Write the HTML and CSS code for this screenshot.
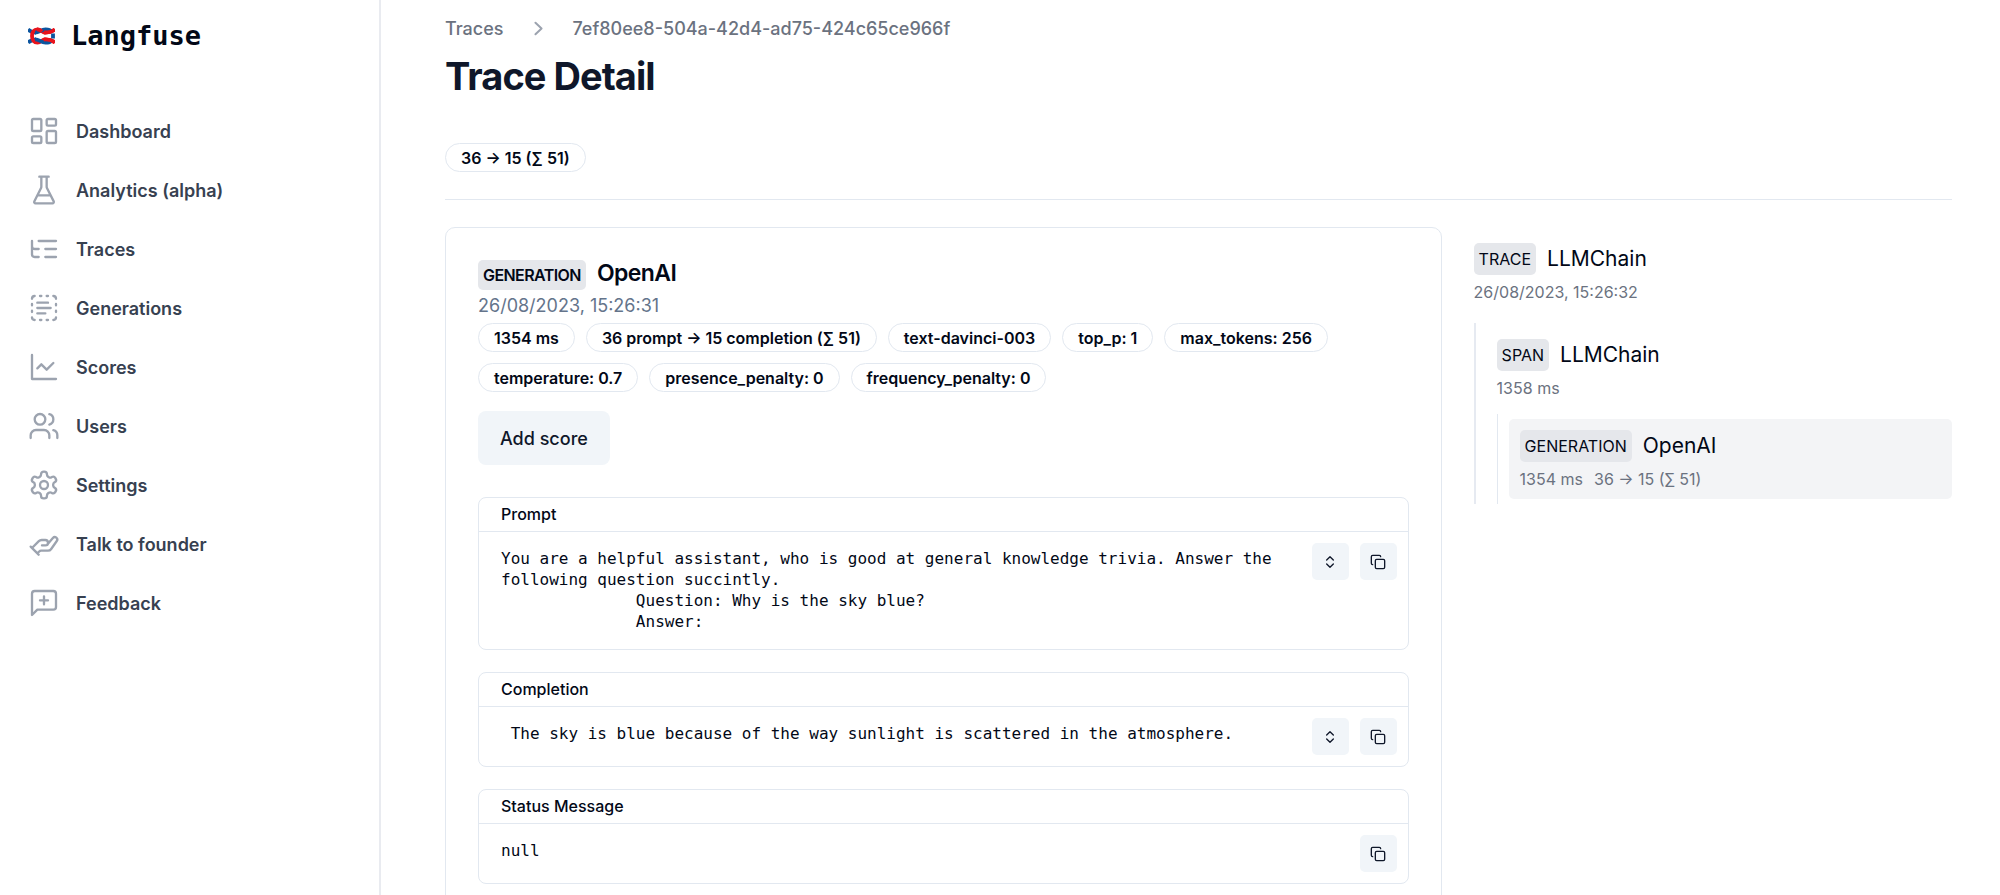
FILE: index.html
```html
<!DOCTYPE html>
<html lang="en">
<head>
<meta charset="utf-8">
<meta name="viewport" content="width=device-width, initial-scale=1">
<title>Trace Detail - Langfuse</title>
<link rel="stylesheet" href="styles.css">
</head>
<body>
<svg class="sprite" aria-hidden="true">
  <symbol id="copy" viewBox="0 0 24 24"><rect x="8" y="8" width="14" height="14" rx="2"/><path d="M4 16c-1.1 0-2-.9-2-2V4c0-1.1.9-2 2-2h10c1.1 0 2 .9 2 2"/></symbol>
  <symbol id="updown" viewBox="0 0 24 24"><path d="m7 15 5 5 5-5M7 9l5-5 5 5"/></symbol>
</svg>
<div class="app">
  <aside class="sidebar">
    <a class="brand" href="#">
      <svg class="knot" viewBox="0 0 27 18" fill="none" stroke-width="3.8" aria-hidden="true">
        <path stroke="#0b559f" d="M0 2.500C3 5 5 5.500 8 5.500M0 15.500C3 13 5 12.500 8 12.500"/>
        <path stroke="#e8141c" d="M27 2.500C24 5 21 5.500 17 5.600C14 5.500 13 2.300 9.500 2.300C6 2.300 4 5 4 9C4 13 6 15.700 9.500 15.700C13 15.700 14 12.500 17 12.400C21 12.500 24 13 27 15.500"/>
        <path stroke="#0b559f" d="M7 5.600C11 5.800 13 2.300 17.500 2.300C20.500 2.300 22.500 3 23.500 4.400M25 6.500V11.500M7 12.400C11 12.200 13 15.700 17.500 15.700C20.500 15.700 22.500 15 23.500 13.600"/>
        <path stroke="#e8141c" d="M9 2.300C11.500 2.300 13 3.500 14 4.600M16 12.500C20 12.200 24 12.800 27 15.500M16 5.500C21 5.700 24 5 27 2.500"/>
      </svg>
      <span class="brand-name">Langfuse</span>
    </a>
    <nav class="nav">
      <a class="nav-item" href="#"><svg class="icon" viewBox="0 0 24 24"><rect x="3" y="3" width="7" height="9" rx="1"/><rect x="14" y="3" width="7" height="5" rx="1"/><rect x="14" y="12" width="7" height="9" rx="1"/><rect x="3" y="16" width="7" height="5" rx="1"/></svg>Dashboard</a>
      <a class="nav-item" href="#"><svg class="icon" viewBox="0 0 24 24"><path d="M10 2v7.527a2 2 0 0 1-.211.896L4.720 20.550a1 1 0 0 0 .9 1.450h12.760a1 1 0 0 0 .9-1.450l-5.069-10.127A2 2 0 0 1 14 9.527V2M8.500 2h7M7 16h10"/></svg>Analytics (alpha)</a>
      <a class="nav-item" href="#"><svg class="icon" viewBox="0 0 24 24"><path d="M21 12h-8M21 6H8M21 18h-8M3 6v4c0 1.100.9 2 2 2h3M3 10v6c0 1.100.9 2 2 2h3"/></svg>Traces</a>
      <a class="nav-item" href="#"><svg class="icon" viewBox="0 0 24 24"><path d="M5 3a2 2 0 0 0-2 2M19 3a2 2 0 0 1 2 2M21 19a2 2 0 0 1-2 2M5 21a2 2 0 0 1-2-2M9 3h1M9 21h1M14 3h1M14 21h1M3 9v1M21 9v1M3 14v1M21 14v1M7 8h8M7 12h10M7 16h6"/></svg>Generations</a>
      <a class="nav-item" href="#"><svg class="icon" viewBox="0 0 24 24"><path d="M3 3v18h18M19 9l-5 5-4-4-3 3"/></svg>Scores</a>
      <a class="nav-item" href="#"><svg class="icon" viewBox="0 0 24 24"><path d="M16 21v-2a4 4 0 0 0-4-4H6a4 4 0 0 0-4 4v2M22 21v-2a4 4 0 0 0-3-3.870M16 3.130a4 4 0 0 1 0 7.750"/><circle cx="9" cy="7" r="4"/></svg>Users</a>
      <a class="nav-item" href="#"><svg class="icon" viewBox="0 0 24 24"><path d="M12.220 2h-.44a2 2 0 0 0-2 2v.18a2 2 0 0 1-1 1.730l-.43.25a2 2 0 0 1-2 0l-.15-.08a2 2 0 0 0-2.730.73l-.22.38a2 2 0 0 0 .73 2.730l.15.1a2 2 0 0 1 1 1.720v.51a2 2 0 0 1-1 1.740l-.15.09a2 2 0 0 0-.73 2.730l.22.38a2 2 0 0 0 2.730.73l.15-.08a2 2 0 0 1 2 0l.43.25a2 2 0 0 1 1 1.730V20a2 2 0 0 0 2 2h.44a2 2 0 0 0 2-2v-.18a2 2 0 0 1 1-1.730l.43-.25a2 2 0 0 1 2 0l.15.08a2 2 0 0 0 2.730-.73l.22-.39a2 2 0 0 0-.73-2.730l-.15-.08a2 2 0 0 1-1-1.740v-.5a2 2 0 0 1 1-1.740l.15-.09a2 2 0 0 0 .73-2.730l-.22-.38a2 2 0 0 0-2.730-.73l-.15.08a2 2 0 0 1-2 0l-.43-.25a2 2 0 0 1-1-1.730V4a2 2 0 0 0-2-2z"/><circle cx="12" cy="12" r="3"/></svg>Settings</a>
      <a class="nav-item" href="#"><svg class="icon" viewBox="0 0 24 24"><path d="m3 15 5.120-5.120A3 3 0 0 1 10.240 9H13a2 2 0 1 1 0 4h-2.500m4-.68 4.170-4.890a1.880 1.880 0 0 1 2.920 2.360l-4.200 5.940A3 3 0 0 1 14.960 17H9.830a2 2 0 0 0-1.420.59L7 19M2 14l6 6"/></svg>Talk to founder</a>
      <a class="nav-item" href="#"><svg class="icon" viewBox="0 0 24 24"><path d="M21 15a2 2 0 0 1-2 2H7l-4 4V5a2 2 0 0 1 2-2h14a2 2 0 0 1 2 2zM9 10h6M12 7v6"/></svg>Feedback</a>
    </nav>
  </aside>

  <main class="main">
    <nav class="crumbs" aria-label="Breadcrumb">
      <a href="#">Traces</a>
      <svg class="crumb-sep" viewBox="0 0 20 20" aria-hidden="true"><path d="M7.210 14.770a.75.75 0 01.02-1.060L11.168 10 7.230 6.290a.75.75 0 111.040-1.080l4.500 4.250a.75.75 0 010 1.080l-4.500 4.250a.75.75 0 01-1.060-.02z"/></svg>
      <a href="#">7ef80ee8-504a-42d4-ad75-424c65ce966f</a>
    </nav>
    <h1 class="title">Trace Detail</h1>
    <div class="summary"><span class="pill">36 → 15 (∑ 51)</span></div>

    <div class="columns">
      <section class="card">
        <h2 class="card-title"><span class="tag">GENERATION</span>OpenAI</h2>
        <p class="card-date">26/08/2023, 15:26:31</p>
        <div class="pills">
          <span class="pill">1354 ms</span>
          <span class="pill">36 prompt → 15 completion (∑ 51)</span>
          <span class="pill">text-davinci-003</span>
          <span class="pill">top_p: 1</span>
          <span class="pill">max_tokens: 256</span>
          <span class="pill">temperature: 0.7</span>
          <span class="pill">presence_penalty: 0</span>
          <span class="pill">frequency_penalty: 0</span>
        </div>
        <button class="add-score" type="button">Add score</button>

        <div class="blocks">
          <section class="block">
            <h3 class="block-head">Prompt</h3>
            <div class="block-body">
              <pre class="code">You are a helpful assistant, who is good at general knowledge trivia. Answer the following question succintly.
              Question: Why is the sky blue?
              Answer:</pre>
              <div class="actions">
                <button class="icon-btn" type="button" aria-label="Expand"><svg><use href="#updown"/></svg></button>
                <button class="icon-btn" type="button" aria-label="Copy"><svg><use href="#copy"/></svg></button>
              </div>
            </div>
          </section>
          <section class="block">
            <h3 class="block-head">Completion</h3>
            <div class="block-body">
              <pre class="code"> The sky is blue because of the way sunlight is scattered in the atmosphere.</pre>
              <div class="actions">
                <button class="icon-btn" type="button" aria-label="Expand"><svg><use href="#updown"/></svg></button>
                <button class="icon-btn" type="button" aria-label="Copy"><svg><use href="#copy"/></svg></button>
              </div>
            </div>
          </section>
          <section class="block">
            <h3 class="block-head">Status Message</h3>
            <div class="block-body">
              <pre class="code">null</pre>
              <div class="actions">
                <button class="icon-btn" type="button" aria-label="Copy"><svg><use href="#copy"/></svg></button>
              </div>
            </div>
          </section>
        </div>
      </section>

      <aside class="tree">
        <div class="node">
          <div class="node-name"><span class="tag">TRACE</span>LLMChain</div>
          <div class="node-meta"><span>26/08/2023, 15:26:32</span></div>
        </div>
        <div class="branch">
          <div class="node">
            <div class="node-name"><span class="tag">SPAN</span>LLMChain</div>
            <div class="node-meta"><span>1358 ms</span></div>
          </div>
          <div class="branch branch-inner">
            <div class="node node-active">
              <div class="node-name"><span class="tag">GENERATION</span>OpenAI</div>
              <div class="node-meta"><span>1354 ms</span><span>36 → 15 (∑ 51)</span></div>
            </div>
          </div>
        </div>
      </aside>
    </div>
  </main>
</div>
</body>
</html>
```
FILE: styles.css
```css
* { box-sizing: border-box; }
body {
  margin: 0;
  background: #fff;
  color: #020817;
  font-family: Inter, "Liberation Sans", sans-serif;
  font-size: 16px;
}
a { color: inherit; text-decoration: none; }
h1, h2, h3, p, pre { margin: 0; }
button { border: 0; color: inherit; font-family: inherit; cursor: pointer; }
svg { display: block; flex: none; }
.sprite { display: none; }

.app {
  display: grid;
  grid-template-columns: 381px minmax(0, 1fr);
  height: 100vh;
  overflow: hidden;
}

.sidebar { border-right: 2px solid #e9ebf0; padding: 0 24px; }
.brand { display: flex; align-items: center; gap: 16px; height: 72px; padding-left: 4px; }
.knot { width: 27px; height: 18px; }
.brand-name {
  font-family: "DejaVu Sans Mono", monospace;
  font-size: 27px;
  font-weight: 700;
  line-height: 32px;
}
.nav { display: flex; flex-direction: column; gap: 5px; padding-top: 32px; }
.nav-item {
  display: flex;
  align-items: center;
  gap: 16px;
  height: 54px;
  padding-left: 4px;
  color: #374151;
  font-size: 18px;
  font-weight: 600;
}
.icon {
  width: 32px;
  height: 32px;
  fill: none;
  stroke: #9ca3af;
  stroke-width: 1.75;
  stroke-linecap: round;
  stroke-linejoin: round;
}

.main { padding: 14px 48px 0 64px; overflow: hidden; }
.crumbs {
  display: flex;
  align-items: center;
  gap: 21px;
  height: 28px;
  color: #6b7280;
  font-size: 18px;
  font-weight: 500;
}
.crumb-sep { width: 27px; height: 27px; fill: #9ca3af; }
.title {
  margin-top: 10px;
  color: #0f172a;
  font-size: 38px;
  font-weight: 700;
  line-height: 48px;
  letter-spacing: -0.025em;
}
.summary { display: flex; margin-top: 43px; padding-bottom: 27px; border-bottom: 1px solid #e2e8f0; }
.pill {
  display: flex;
  align-items: center;
  height: 29px;
  padding: 0 15px;
  border: 1px solid #e2e8f0;
  border-radius: 15px;
  font-size: 16px;
  font-weight: 600;
  white-space: nowrap;
}

.columns {
  display: grid;
  grid-template-columns: minmax(0, 25fr) minmax(0, 12fr);
  align-items: start;
  gap: 32px;
  margin-top: 27px;
}
.card { padding: 32px; border: 1px solid #e2e8f0; border-radius: 10px; }
.card-title {
  display: flex;
  align-items: baseline;
  gap: 11px;
  font-size: 23px;
  font-weight: 600;
  line-height: 26px;
  letter-spacing: -0.025em;
}
.tag { padding: 0 5px; border-radius: 5px; background: #e5e7eb; font-size: 16px; line-height: 30px; }
.card-date { padding-bottom: 2px; color: #64748b; font-size: 18px; line-height: 31px; }
.pills { display: flex; flex-wrap: wrap; gap: 11px; }
.add-score {
  height: 54px;
  margin-top: 19px;
  padding: 0 22px;
  border-radius: 8px;
  background: #f1f5f9;
  color: #0f172a;
  font-size: 18px;
  font-weight: 500;
}
.blocks { display: grid; gap: 22px; margin-top: 32px; }
.block { border: 1px solid #e2e8f0; border-radius: 8px; }
.block-head {
  padding: 0 22px;
  border-bottom: 1px solid #e2e8f0;
  font-size: 16px;
  font-weight: 500;
  line-height: 33px;
}
.block-body { display: flex; align-items: flex-start; }
.code {
  flex: 1;
  min-width: 0;
  padding: 16px 0 17px 22px;
  font-family: "DejaVu Sans Mono", monospace;
  font-size: 16px;
  line-height: 21px;
  white-space: pre-wrap;
}
.actions { display: flex; gap: 11px; padding: 11px; }
.icon-btn {
  display: grid;
  place-items: center;
  width: 37px;
  height: 37px;
  padding: 0;
  border-radius: 5px;
  background: #f1f5f9;
}
.icon-btn svg {
  width: 16px;
  height: 16px;
  fill: none;
  stroke: #0f172a;
  stroke-width: 2;
  stroke-linecap: round;
  stroke-linejoin: round;
}

.tree { padding-top: 16px; }
.node-name { display: flex; align-items: center; gap: 11px; font-size: 21px; line-height: 32px; }
.node-name .tag { line-height: 32px; }
.node-meta { display: flex; gap: 11px; color: #6b7280; font-size: 16px; line-height: 34px; }
.branch { margin-top: 14px; padding: 16px 0 0 21px; border-left: 2px solid #e6eaf1; }
.branch-inner { margin-top: 9px; padding: 5px 0 5px 11px; border-left: 1px solid #e2e8f0; }
.node-active { padding: 11px 11px 3px; border-radius: 5px; background: #f3f4f6; }
```
